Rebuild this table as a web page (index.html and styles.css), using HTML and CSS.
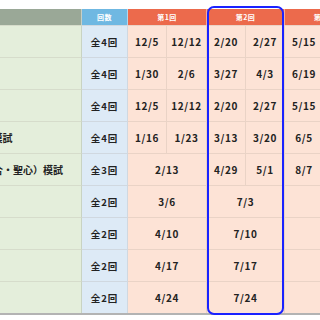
FILE: index.html
```html
<!DOCTYPE html>
<html lang="ja">
<head>
<meta charset="utf-8">
<link rel="stylesheet" href="styles.css">
</head>
<body>
<div class="viewport">
  <div class="sheet">
    <div class="grid">
      <div class="h h-label"></div>
      <div class="h h-count">回数</div>
      <div class="h h-round span2">第1回</div>
      <div class="h h-round span2">第2回</div>
      <div class="h h-round span2">第3回</div>
      <div class="h h-round span2">第4回</div>

      <div class="c label">合不合判定テスト</div>
      <div class="c count">全4回</div>
      <div class="c d">12/5</div><div class="c d">12/12</div><div class="c d">2/20</div><div class="c d">2/27</div><div class="c d">5/15</div><div class="c d">5/22</div><div class="c d">7/3</div><div class="c d">7/10</div>

      <div class="c label">志望校判定模試</div>
      <div class="c count">全4回</div>
      <div class="c d">1/30</div><div class="c d">2/6</div><div class="c d">3/27</div><div class="c d">4/3</div><div class="c d">6/19</div><div class="c d">6/26</div><div class="c d">8/7</div><div class="c d">8/14</div>

      <div class="c label">首都圏統一模試</div>
      <div class="c count">全4回</div>
      <div class="c d">12/5</div><div class="c d">12/12</div><div class="c d">2/20</div><div class="c d">2/27</div><div class="c d">5/15</div><div class="c d">5/22</div><div class="c d">7/3</div><div class="c d">7/10</div>

      <div class="c label">難関私立中学校オープン模試</div>
      <div class="c count">全4回</div>
      <div class="c d">1/16</div><div class="c d">1/23</div><div class="c d">3/13</div><div class="c d">3/20</div><div class="c d">6/5</div><div class="c d">6/12</div><div class="c d">8/21</div><div class="c d">8/28</div>

      <div class="c label">難関校（女子学院・白百合・聖心）模試</div>
      <div class="c count">全3回</div>
      <div class="c d span2">2/13</div><div class="c d">4/29</div><div class="c d">5/1</div><div class="c d">8/7</div><div class="c d">8/14</div><div class="c d span2"></div>

      <div class="c label">女子校別模試</div>
      <div class="c count">全2回</div>
      <div class="c d span2">3/6</div><div class="c d span2">7/3</div><div class="c d span2"></div><div class="c d span2"></div>

      <div class="c label">男子校別模試</div>
      <div class="c count">全2回</div>
      <div class="c d span2">4/10</div><div class="c d span2">7/10</div><div class="c d span2"></div><div class="c d span2"></div>

      <div class="c label">共学校別模試</div>
      <div class="c count">全2回</div>
      <div class="c d span2">4/17</div><div class="c d span2">7/17</div><div class="c d span2"></div><div class="c d span2"></div>

      <div class="c label">算数特訓模試</div>
      <div class="c count">全2回</div>
      <div class="c d span2">4/24</div><div class="c d span2">7/24</div><div class="c d span2"></div><div class="c d span2"></div>
    </div>
    <div class="highlight"></div>
  </div>
</div>
</body>
</html>
```

FILE: styles.css
```css
html, body {
  margin: 0;
  padding: 0;
  background: #ffffff;
}

.viewport {
  width: 320px;
  height: 320px;
  overflow: hidden;
  padding-top: 9px;
  box-sizing: border-box;
}

.sheet {
  position: relative;
  margin-left: -127px;
  width: 600px;
}

.grid {
  display: grid;
  grid-template-columns: 209px 46px 39px 40px 39px 39px 39px 39px 39px 39px;
  grid-template-rows: 16px repeat(9, 32px);
  border-bottom: 2px solid #b3b3b3;
  font-family: "Noto Sans CJK JP", "Noto Sans", sans-serif;
  font-weight: 700;
  color: #222222;
}

.h {
  display: flex;
  align-items: center;
  justify-content: center;
  color: #ffffff;
  font-size: 7px;
  letter-spacing: 0.5px;
  border-right: 1px solid rgba(255, 255, 255, 0.45);
  box-sizing: border-box;
}

.h-label { background: #9aa897; }
.h-count { background: #6fb8e2; }
.h-round { background: #ec6a4c; }

.span2 { grid-column: span 2; }

.c {
  display: flex;
  align-items: center;
  justify-content: center;
  box-sizing: border-box;
  border-right: 1px solid rgba(150, 140, 130, 0.18);
  border-top: 1px solid rgba(150, 140, 130, 0.18);
  font-size: 10px;
  letter-spacing: 0.6px;
  white-space: nowrap;
}

.label {
  justify-content: flex-start;
  padding-left: 10px;
  background: #e4eedb;
  letter-spacing: 0;
  border-right-color: rgba(140, 150, 140, 0.3);
}

.count {
  background: #ddeaf6;
  font-size: 9.5px;
  letter-spacing: 1px;
}

.d {
  background: #fde3d6;
}

.highlight {
  position: absolute;
  left: 334px;
  top: -3px;
  width: 77px;
  height: 309px;
  border: 2px solid #1a22ff;
  border-radius: 7px;
  box-sizing: border-box;
}
```
